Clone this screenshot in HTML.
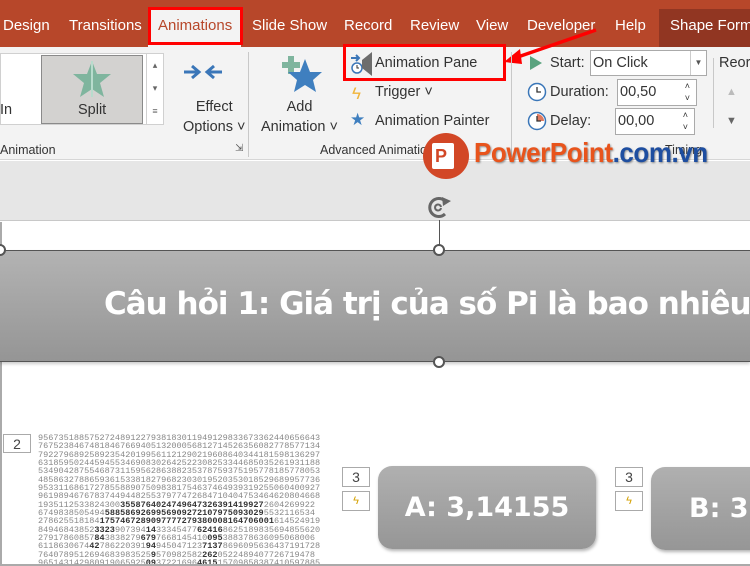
<!DOCTYPE html>
<html><head><meta charset="utf-8"><style>
*{margin:0;padding:0;box-sizing:border-box}
html,body{width:750px;height:566px;overflow:hidden}
body{position:relative;background:#fff;font-family:"Liberation Sans","DejaVu Sans",sans-serif;color:#333}
.a{position:absolute;white-space:nowrap}
.tab{position:absolute;top:17px;font-size:15px;color:#fff;white-space:nowrap}
.rb{font-size:14.5px;color:#333}
.red{position:absolute;border:3.5px solid #f00}
.dg{font-family:"Liberation Mono",monospace;font-size:8.55px;line-height:8.35px;color:#888;letter-spacing:0}
.dg b{color:#333}
.num{position:absolute;width:28px;height:20px;border:1px solid #aaa;background:#fff;font-size:14px;text-align:center;line-height:18px;color:#444}
.btn{position:absolute;border-radius:14px;background:linear-gradient(#b0b0b0,#969696);box-shadow:1px 2px 3px rgba(0,0,0,.3);color:#fff;font-weight:bold;font-size:27px;text-align:center;font-family:"DejaVu Sans","Liberation Sans",sans-serif;white-space:nowrap;overflow:hidden}
</style></head><body>
<div class="a" style="left:0;top:0;width:750px;height:47px;background:#b7472a"></div>
<div class="a" style="left:659px;top:9px;width:91px;height:38px;background:#913622"></div>
<div class="tab" style="left:3px">Design</div>
<div class="tab" style="left:69px">Transitions</div>
<div class="a" style="left:148px;top:9px;width:93px;height:38px;background:#f3f3f3"></div>
<div class="tab" style="left:158px;color:#b7472a">Animations</div>
<div class="red" style="left:148px;top:7px;width:95px;height:38px"></div>
<div class="tab" style="left:252px">Slide Show</div>
<div class="tab" style="left:344px">Record</div>
<div class="tab" style="left:410px">Review</div>
<div class="tab" style="left:476px">View</div>
<div class="tab" style="left:527px">Developer</div>
<div class="tab" style="left:615px">Help</div>
<div class="tab" style="left:670px">Shape Format</div>
<div class="a" style="left:0;top:47px;width:750px;height:113px;background:#f3f3f3;border-bottom:1px solid #d6d6d6"></div>
<div class="a" style="left:0;top:53px;width:164px;height:72px;background:#fff;border:1px solid #d0d0d0"></div>
<div class="a" style="left:41px;top:55px;width:102px;height:69px;background:#d3d2d0;border:1px solid #8a8a8a"></div>
<svg class="a" style="left:72px;top:60px" width="40" height="38" viewBox="0 0 40 38"><polygon points="20,1 25,14 39,14 28,23 32,37 20,29 8,37 12,23 1,14 15,14" fill="#7fb59e"/><rect x="19" y="1" width="2" height="36" fill="#b8dccd"/></svg>
<div class="a rb" style="left:0px;top:102px">In</div>
<div class="a rb" style="left:78px;top:102px">Split</div>
<div class="a" style="left:146px;top:54px;width:17px;height:70px;border-left:1px solid #d0d0d0;font-size:9px;color:#666;text-align:center;line-height:23px">▴<br>▾<br>≡</div>
<svg class="a" style="left:182px;top:63px" width="42" height="18"><path d="M2 9h14M10 3l7 6-7 6M40 9H26M32 3l-7 6 7 6" stroke="#3a76b8" stroke-width="3" fill="none"/></svg>
<div class="a rb" style="left:183px;top:97px;text-align:center;line-height:20px">Effect<br>Options ˅</div>
<div class="a" style="left:248px;top:52px;width:1px;height:105px;background:#c8c8c8"></div>
<div class="a" style="left:235px;top:143px;font-size:10px;color:#555">⇲</div>
<div class="a rb" style="left:0;top:143px;font-size:12.5px">Animation</div>
<svg class="a" style="left:282px;top:55px" width="42" height="38"><path d="M5 1h6v6h6v6h-6v6H5v-6H-1V7h6z" fill="#7fb59e" transform="translate(1,0)"/><polygon points="25,4 30,17 42,17 33,25 36,37 25,30 14,37 17,25 8,17 20,17" fill="#3f7fbf" transform="translate(-2,0)"/></svg>
<div class="a rb" style="left:261px;top:97px;text-align:center;line-height:20px">Add<br>Animation ˅</div>
<svg class="a" style="left:350px;top:50px" width="26" height="28"><path d="M1 8h8M6 5l3 3-3 3" stroke="#3a76b8" stroke-width="2" fill="none"/><circle cx="7" cy="18" r="5" fill="#fff" stroke="#3a76b8" stroke-width="1.5"/><path d="M7 15v3h2" stroke="#333" fill="none"/><polygon points="12,10 22,2 22,26 12,18" fill="#6d6d6d"/></svg>
<div class="a rb" style="left:375px;top:55px">Animation Pane</div>
<div class="red" style="left:343px;top:44px;width:163px;height:37px"></div>
<svg class="a" style="left:500px;top:27px" width="100" height="40"><path d="M96 3L12 32" stroke="#f00" stroke-width="3.5"/><polygon points="4,35 20,22 22,37" fill="#f00"/></svg>
<div class="a" style="left:352px;top:84px;color:#f0b43a;font-size:17px">ϟ</div>
<div class="a rb" style="left:375px;top:84px">Trigger ˅</div>
<div class="a" style="left:350px;top:110px;color:#3f7fbf;font-size:17px">★</div>
<div class="a rb" style="left:375px;top:113px">Animation Painter</div>
<div class="a rb" style="left:320px;top:143px;font-size:12.5px">Advanced Animation</div>
<div class="a" style="left:511px;top:52px;width:1px;height:105px;background:#c8c8c8"></div>
<svg class="a" style="left:530px;top:56px" width="12" height="14"><polygon points="0,0 12,7 0,14" fill="#5aa37f"/></svg>
<div class="a rb" style="left:550px;top:55px">Start:</div>
<div class="a rb" style="left:590px;top:50px;width:117px;height:26px;background:#fff;border:1px solid #aaa;padding:4px 2px">On Click</div>
<div class="a" style="left:690px;top:51px;width:16px;height:24px;border-left:1px solid #ccc;font-size:8px;color:#555;text-align:center;line-height:24px">▼</div>
<svg class="a" style="left:527px;top:82px" width="20" height="20"><circle cx="10" cy="10" r="8.5" fill="#fff" stroke="#3a76b8" stroke-width="1.5"/><path d="M10 5v5h4" stroke="#333" stroke-width="1.3" fill="none"/></svg>
<div class="a rb" style="left:550px;top:84px">Duration:</div>
<div class="a rb" style="left:617px;top:79px;width:80px;height:27px;background:#fff;border:1px solid #aaa;padding:4px 2px">00,50<span style="position:absolute;right:6px;top:0;font-size:9px;line-height:12px">˄<br>˅</span></div>
<svg class="a" style="left:527px;top:111px" width="20" height="20"><circle cx="10" cy="10" r="8.5" fill="#fff" stroke="#3a76b8" stroke-width="1.5"/><path d="M10 10V3a7 7 0 0 1 7 7z" fill="#e07a5f"/><path d="M10 5v5h4" stroke="#333" stroke-width="1.3" fill="none"/></svg>
<div class="a rb" style="left:550px;top:113px">Delay:</div>
<div class="a rb" style="left:615px;top:108px;width:80px;height:27px;background:#fff;border:1px solid #aaa;padding:4px 2px">00,00<span style="position:absolute;right:6px;top:0;font-size:9px;line-height:12px">˄<br>˅</span></div>
<div class="a rb" style="left:665px;top:143px;font-size:12.5px">Timing</div>
<div class="a" style="left:713px;top:58px;width:1px;height:70px;background:#c8c8c8"></div>
<div class="a rb" style="left:719px;top:55px">Reorder</div>
<div class="a" style="left:726px;top:86px;color:#bbb;font-size:11px">▲</div>
<div class="a" style="left:726px;top:115px;color:#666;font-size:11px">▼</div>
<div class="a" style="left:0;top:161px;width:750px;height:60px;background:#e6e6e6;border-bottom:1px solid #c8c8c8"></div>
<div class="a" style="left:423px;top:133px;width:46px;height:46px;border-radius:50%;background:#d24726"></div>
<div class="a" style="left:432px;top:143px;width:22px;height:26px;background:#fff;border-radius:2px;color:#d24726;font-weight:bold;font-size:18px;padding-left:3px;line-height:26px">P</div>
<div class="a" style="left:474px;top:137px;font-size:28px;font-weight:bold;letter-spacing:-0.5px;transform:scaleX(.93);transform-origin:left;text-shadow:1px 1px 2px rgba(0,0,0,.4)"><span style="color:#e8541c">PowerPoint</span><span style="color:#1e4ea0">.com.vn</span></div>
<div class="a" style="left:0;top:222px;width:2px;height:344px;background:#aaa"></div>
<svg class="a" style="left:425px;top:193px" width="30" height="30"><path d="M20 8a9 9 0 1 0 0 13" stroke="#666" stroke-width="3" fill="none"/><path d="M16 14a3 3 0 1 0 0 1" stroke="#666" stroke-width="2" fill="none"/><polygon points="17,4 26,8 18,13" fill="#666"/></svg>
<div class="a" style="left:439px;top:220px;width:1px;height:30px;background:#555"></div>
<div class="a" style="left:0;top:250px;width:750px;height:112px;background:linear-gradient(#b3b3b3,#959595);border-top:1px solid #555;border-bottom:1px solid #555;box-shadow:0 2px 3px rgba(0,0,0,.2)"></div>
<div class="a" style="left:104px;top:286px;font-size:31px;font-weight:bold;color:#fff;font-family:'DejaVu Sans','Liberation Sans',sans-serif;letter-spacing:-1px">Câu hỏi 1: Giá trị của số Pi là bao nhiêu?</div>
<div class="a" style="left:433px;top:244px;width:12px;height:12px;border-radius:50%;background:#fff;border:2px solid #555"></div>
<div class="a" style="left:433px;top:356px;width:12px;height:12px;border-radius:50%;background:#fff;border:2px solid #555"></div>
<div class="a" style="left:-6px;top:244px;width:12px;height:12px;border-radius:50%;background:#fff;border:2px solid #555"></div>
<div class="num" style="left:3px;top:434px;height:19px">2</div>
<div class="a dg" style="left:38px;top:434px">9567351885752724891227938183011949129833673362440656643<br>7675238467481846766940513200056812714526356082778577134<br>7922796892589235420199561121290219608640344181598136297<br>6318595024459455346908302642522308253344685035261931188<br>5349042875546873115956286388235378759375195778185778053<br>4858632788659361533818279682303019520353018529689957736<br>9533116861727855889075098381754637464939319255060400927<br>9619894676783744944825537977472684710404753464620804668<br>1935112533824300<b>3558764024749647326391419927</b>2604269922<br>6749838505494<b>5885869269956909272107975093029</b>5532116534<br>278625518184<b>1757467289097777279380008164706001</b>614524919<br>84946843852<b>3323</b>907394<b>14</b>33345477<b>62416</b>8625189835694855620<br>27917860857<b>84</b>3838279<b>679</b>7668145410<b>095</b>388378636095068006<br>6118630674<b>42</b>786220391<b>94</b>945047123<b>7137</b>8696095636437191728<br>7640789512694683983525<b>9</b>570982582<b>262</b>0522489407726719478<br>965143142980919065925<b>09</b>37221696<b>4615</b>15709858387410597885</div>
<div class="num" style="left:342px;top:467px">3</div>
<div class="num" style="left:342px;top:491px;font-size:11px;color:#d4a000">ϟ</div>
<div class="num" style="left:615px;top:467px">3</div>
<div class="num" style="left:615px;top:491px;font-size:11px;color:#d4a000">ϟ</div>
<div class="btn" style="left:378px;top:466px;width:218px;height:83px;line-height:83px">A: 3,14155</div>
<div class="btn" style="left:651px;top:467px;width:120px;height:83px;line-height:83px;text-align:left;padding-left:38px">B: 3,14</div>
<div class="a" style="left:0;top:564px;width:750px;height:2px;background:#aaa"></div>
</body></html>
